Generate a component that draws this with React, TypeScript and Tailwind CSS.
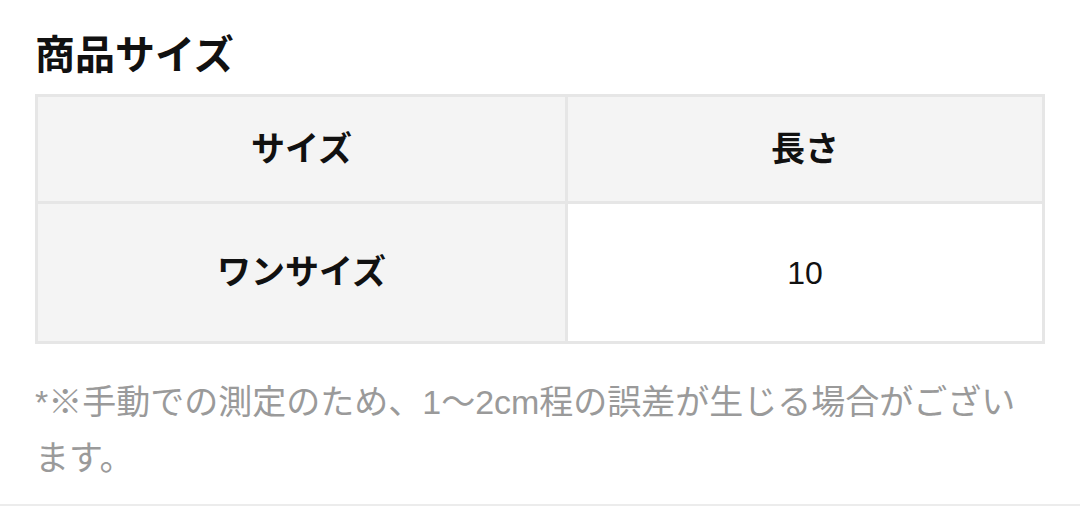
export default function App() {
  return (
    <div
      className="h-[506px] w-[1080px] overflow-hidden bg-white"
      style={{ fontFamily: '"Liberation Sans", "Noto Sans CJK JP", sans-serif' }}
    >
      <div className="flex h-full flex-col border-b-2 border-[#ececec] px-[35px] pt-[30px]">
        <h2 className="text-[40px] font-bold leading-[50px] text-[#111]">商品サイズ</h2>

        <table className="mt-[14px] w-[1010px] table-fixed border-collapse text-[34px] text-[#111]">
          <tbody>
            <tr className="h-[107px] bg-[#f4f4f4]">
              <th className="w-[530px] border-[3px] border-[#e6e6e6] font-bold">サイズ</th>
              <th className="border-[3px] border-[#e6e6e6] font-bold">長さ</th>
            </tr>
            <tr className="h-[140px]">
              <th className="border-[3px] border-[#e6e6e6] bg-[#f4f4f4] font-bold">ワンサイズ</th>
              <td className="border-[3px] border-[#e6e6e6] bg-white text-center text-[32px]">10</td>
            </tr>
          </tbody>
        </table>

        <p className="mt-[30px] w-[1000px] text-[34px] leading-[56px] text-[#9a9a9a]">
          *※手動での測定のため、1〜2cm程の誤差が生じる場合がございます。
        </p>
      </div>
    </div>
  );
}
